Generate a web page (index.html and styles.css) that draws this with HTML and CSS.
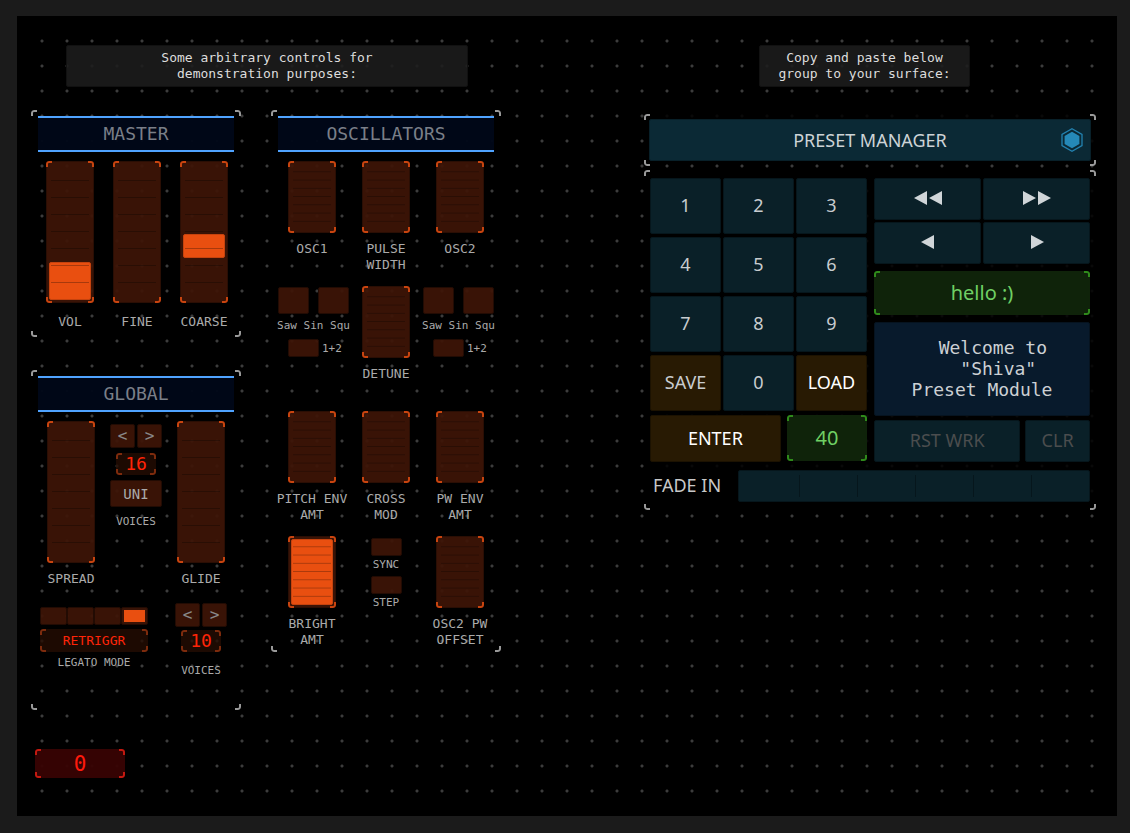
FILE: index.html
```html
<!DOCTYPE html>
<html lang="en">
<head>
<meta charset="utf-8">
<title>Preset Manager</title>
<link rel="stylesheet" href="styles.css">
</head>
<body>
<main class="surface">
  <section class="side side-synth">
    <p class="note note-wide">Some arbitrary controls for<br>demonstration purposes:</p>
    <div class="groups">
      <div class="column">
        <section class="group master">
          <h2 class="title">MASTER</h2>
          <div class="master-faders">
            <label class="control"><span class="fader tall"><span class="fill" style="height:28%"></span><input type="range" value="28"></span><span class="caption">VOL</span></label>
            <label class="control"><span class="fader tall"><input type="range" value="0"></span><span class="caption">FINE</span></label>
            <label class="control"><span class="fader tall"><span class="fill" style="height:18%;margin-bottom:42px"></span><input type="range" value="50"></span><span class="caption">COARSE</span></label>
          </div>
        </section>
        <section class="group global">
          <h2 class="title">GLOBAL</h2>
          <div class="global-top">
            <label class="control"><span class="fader tall"><input type="range" value="0"></span><span class="caption">SPREAD</span></label>
            <div class="voices unison">
              <div class="steps"><button class="pad">&lt;</button><button class="pad">&gt;</button></div>
              <output class="value">16</output>
              <button class="pad uni">UNI</button>
              <span class="small">VOICES</span>
            </div>
            <label class="control"><span class="fader tall"><input type="range" value="0"></span><span class="caption">GLIDE</span></label>
          </div>
          <div class="global-bottom">
            <div class="legato">
              <div class="modes">
                <input type="radio" name="legato" aria-label="Mode 1"><input type="radio" name="legato" aria-label="Mode 2"><input type="radio" name="legato" aria-label="Mode 3"><input type="radio" name="legato" aria-label="Mode 4" checked>
              </div>
              <output class="value wide">RETRIGGR</output>
              <span class="small">LEGATO MODE</span>
            </div>
            <div class="voices">
              <div class="steps"><button class="pad">&lt;</button><button class="pad">&gt;</button></div>
              <output class="value">10</output>
              <span class="small">VOICES</span>
            </div>
          </div>
        </section>
        <output class="value counter">0</output>
      </div>
      <section class="group oscillators">
        <h2 class="title">OSCILLATORS</h2>
        <div class="osc-grid">
          <label class="control"><span class="fader"><input type="range" value="0"></span><span class="caption">OSC1</span></label>
          <label class="control"><span class="fader"><input type="range" value="0"></span><span class="caption">PULSE<br>WIDTH</span></label>
          <label class="control"><span class="fader"><input type="range" value="0"></span><span class="caption">OSC2</span></label>

          <div class="waves waves-left">
            <div class="wave-row"><input class="toggle square" type="checkbox" aria-label="Osc 1 saw"><input class="toggle square" type="checkbox" aria-label="Osc 1 square"></div>
            <span class="small">Saw Sin Squ</span>
            <label class="sum"><input class="toggle" type="checkbox"><span class="small">1+2</span></label>
          </div>
          <label class="control"><span class="fader"><input type="range" value="0"></span><span class="caption">DETUNE</span></label>
          <div class="waves">
            <div class="wave-row"><input class="toggle square" type="checkbox" aria-label="Osc 2 saw"><input class="toggle square" type="checkbox" aria-label="Osc 2 square"></div>
            <span class="small">Saw Sin Squ</span>
            <label class="sum"><input class="toggle" type="checkbox"><span class="small">1+2</span></label>
          </div>

          <label class="control"><span class="fader"><input type="range" value="0"></span><span class="caption">PITCH ENV<br>AMT</span></label>
          <label class="control"><span class="fader"><input type="range" value="0"></span><span class="caption">CROSS<br>MOD</span></label>
          <label class="control"><span class="fader"><input type="range" value="0"></span><span class="caption">PW ENV<br>AMT</span></label>

          <label class="control"><span class="fader"><span class="fill" style="height:100%"></span><input type="range" value="100"></span><span class="caption">BRIGHT<br>AMT</span></label>
          <div class="switches">
            <label><input class="toggle" type="checkbox"><span class="small">SYNC</span></label>
            <label><input class="toggle" type="checkbox"><span class="small">STEP</span></label>
          </div>
          <label class="control"><span class="fader"><input type="range" value="0"></span><span class="caption">OSC2 PW<br>OFFSET</span></label>
        </div>
      </section>
    </div>
  </section>

  <section class="side side-preset">
    <p class="note note-narrow">Copy and paste below<br>group to your surface:</p>
    <header class="group preset-head">
      <h1>PRESET MANAGER</h1>
      <svg class="hex" viewBox="0 0 24 26" aria-hidden="true">
        <path d="M12 1.8 22 7.4V18.6L12 24.2 2 18.6V7.4Z" fill="none" stroke="#2382b0" stroke-width="1.3"/>
        <path d="M12 4.8 19.4 8.9V17.1L12 21.2 4.6 17.1V8.9Z" fill="#2589b8"/>
      </svg>
    </header>
    <div class="group preset-body">
      <div class="halves">
        <div class="keys-side">
          <div class="keypad">
            <button class="key">1</button><button class="key">2</button><button class="key">3</button>
            <button class="key">4</button><button class="key">5</button><button class="key">6</button>
            <button class="key">7</button><button class="key">8</button><button class="key">9</button>
            <button class="key brown">SAVE</button><button class="key">0</button><button class="key brown bright">LOAD</button>
          </div>
          <div class="enter-row">
            <button class="key brown bright enter">ENTER</button>
            <output class="value green number">40</output>
          </div>
        </div>
        <div class="info-side">
          <div class="nav">
            <button class="key" aria-label="First"><svg viewBox="0 0 28 14"><path d="M13 0V14L0 7ZM28 0V14L15 7Z"/></svg></button>
            <button class="key" aria-label="Last"><svg viewBox="0 0 28 14"><path d="M0 0V14L13 7ZM15 0V14L28 7Z"/></svg></button>
            <button class="key" aria-label="Previous"><svg viewBox="0 0 28 14"><path d="M20 0V14L7 7Z"/></svg></button>
            <button class="key" aria-label="Next"><svg viewBox="0 0 28 14"><path d="M8 0V14L21 7Z"/></svg></button>
          </div>
          <output class="value green name">hello :)</output>
          <pre class="message">  Welcome to
   "Shiva"
Preset Module</pre>
          <div class="reset-row">
            <button class="key reset" disabled>RST WRK</button><button class="key clear" disabled>CLR</button>
          </div>
        </div>
      </div>
      <label class="fade"><span>FADE IN</span><span class="fade-track"><input type="range" value="0"></span></label>
    </div>
  </section>
</main>
</body>
</html>
```
FILE: styles.css
```css
* { box-sizing: border-box; }

body {
  margin: 0;
  padding: 16px 13px 17px 17px;
  background: #1b1b1b;
  color: #aaa;
  font: 13px/16px "DejaVu Sans Mono", monospace;
}

h1, h2, p, pre { margin: 0; font-weight: 400; }
button, output { font: inherit; color: inherit; }
button { padding: 0; border: 0; }
input { margin: 0; }

.surface {
  display: flex;
  justify-content: space-between;
  gap: 24px;
  min-height: calc(100vh - 33px);
  padding: 14px 21px 20px 14px;
  background:
    radial-gradient(circle at 12px 12px, #3c3c3c 1px, transparent 2px) 13px 13px / 25px 25px padding-box content-box,
    #000;
}

.side { padding-top: 15px; }
.side-synth { flex: 0 0 470px; }
.side-preset { flex: 0 1 452px; }

.note {
  height: 42px;
  padding: 4px 0;
  border: 1px solid #111;
  border-radius: 2px;
  background: rgba(29, 29, 29, .88);
  color: #ddd;
  text-align: center;
}
.note-wide { width: 402px; margin: 0 auto 23px 35px; }
.note-narrow { width: 211px; margin: 0 0 27px 115px; }

.groups { display: flex; gap: 30px; align-items: flex-start; }
.column { flex: 0 0 210px; }
.group, .fader, .value { position: relative; }
.group { --corner: #999; }

/* Bracket marks on the four corners */
.group::after, .fader::after, .value::after {
  content: "";
  position: absolute;
  inset: 0;
  border: 2px solid var(--corner);
  border-radius: 3px;
  pointer-events: none;
  --c: linear-gradient(#000 0 0);
  mask: var(--c) 0 0, var(--c) 100% 0, var(--c) 0 100%, var(--c) 100% 100%;
  mask-size: 6px 6px;
  mask-repeat: no-repeat;
}

.title {
  margin: 0 7px 9px;
  height: 36px;
  border: solid #4fa3ff;
  border-width: 2px 0;
  background: rgba(0, 7, 24, .97);
  color: #7a7f88;
  font-size: 18px;
  line-height: 32px;
  text-align: center;
}

.master { padding: 6px 0 7px; margin-bottom: 33px; }
.master-faders { display: flex; gap: 19px; padding-left: 15px; }
.master .caption { margin-top: 11px; }

.control { display: flex; flex-direction: column; align-items: center; }
.master .control, .global .control { width: 48px; }
.caption { margin-top: 8px; text-align: center; white-space: nowrap; }

.fader {
  --corner: #c8440f;
  display: flex;
  align-items: flex-end;
  width: 48px;
  height: 72px;
  padding: 3px;
  border-radius: 3px;
  background: rgba(62, 21, 6, .92);
  box-shadow: inset 0 0 0 1px #2a0e04;
}
.fader.tall { height: 142px; }
.fader::before {
  content: "";
  position: absolute;
  inset: 3px 5px;
  background: linear-gradient(to top, rgba(0, 0, 0, .28) 1px, transparent 1px) 0 0 / 100% 12.5%;
  clip-path: inset(0 0 2px 0);
}
.fill {
  width: 100%;
  border: 1px solid #c5430e;
  border-radius: 2px;
  background: #e94f10;
}
.fader input, .fade-track input {
  position: absolute;
  inset: 0;
  width: 100%;
  height: 100%;
  opacity: 0;
}
.fader input { writing-mode: vertical-lr; direction: rtl; }

.global { padding: 6px 0 31px; margin-bottom: 39px; }
.global-top { display: flex; gap: 15px; padding-left: 16px; margin-bottom: 16px; }
.global-bottom { display: flex; gap: 27px; padding-left: 9px; }
.voices { display: flex; flex-direction: column; align-items: center; width: 52px; }
.unison { padding-top: 3px; }
.steps { display: flex; gap: 2px; margin-bottom: 3px; }
.unison .steps { margin-bottom: 5px; }
.pad, .toggle, .modes input {
  appearance: none;
  border: 1px solid #220b03;
  border-radius: 2px;
  background: rgba(62, 21, 6, .92);
}
.pad { width: 25px; height: 24px; color: #888; font-size: 16px; line-height: 22px; }
.pad.uni { width: 52px; height: 27px; margin: 5px 0 7px; color: #aaa; font-size: 14px; }
.small { font-size: 11px; white-space: nowrap; }
.voices > .small { margin-top: 11px; }
.unison > .small { margin-top: 0; }

.value {
  --corner: #7d2b0d;
  display: flex;
  align-items: center;
  justify-content: center;
  width: 40px;
  height: 22px;
  border-radius: 3px;
  background: rgba(36, 12, 3, .8);
  color: #ff2408;
  font-size: 18px;
}
.value.wide { width: 108px; height: 23px; margin: 4px 0 3px; font-size: 13px; }
.value.counter {
  --corner: #c31910;
  width: 90px;
  height: 29px;
  margin-left: 4px;
  background: rgba(56, 3, 3, .94);
  color: #ff1a0c;
  font-size: 21px;
}

.legato { display: flex; flex-direction: column; align-items: center; width: 108px; padding-top: 4px; }
.modes { display: flex; }
.modes input { width: 27px; height: 18px; }
.modes input:checked {
  padding: 2px;
  background: linear-gradient(#e94f10 0 0) content-box, rgba(62, 21, 6, .92);
}

.oscillators { flex: 0 0 230px; padding: 6px 0 4px; }
.osc-grid {
  display: grid;
  grid-template-columns: repeat(3, 74px);
  grid-auto-rows: 112px;
  row-gap: 13px;
  padding-left: 4px;
}
.toggle { display: block; width: 31px; height: 18px; }
.toggle.square { height: 27px; }
.waves { display: flex; flex-direction: column; align-items: center; width: 71px; padding-top: 1px; }
.waves-left { justify-self: end; }
.wave-row { display: flex; gap: 9px; margin-bottom: 4px; }
.sum { display: flex; gap: 3px; width: 71px; padding-left: 10px; margin-top: 5px; line-height: 20px; }
.switches { display: flex; flex-direction: column; align-items: center; gap: 3px; padding-top: 2px; }
.switches label { display: flex; flex-direction: column; align-items: center; gap: 1px; }

.side-preset h1, .key, .fade, .green { font-family: "Noto Sans", sans-serif; font-size: 18px; }
.preset-head {
  display: flex;
  align-items: center;
  height: 52px;
  margin-bottom: 4px;
  padding: 5px;
  background: linear-gradient(rgba(0, 0, 0, .85) 0 0) no-repeat 0 0 / 100% 46px;
}
.side-preset h1 {
  flex: 1;
  border: 1px solid #082029;
  border-radius: 2px;
  background: #0b2935;
  color: #cdd3d6;
  line-height: 40px;
  text-align: center;
}
.hex { position: absolute; right: 12px; top: 13px; width: 24px; height: 26px; }

.preset-body { padding: 8px 6px; background: rgba(0, 0, 0, .85); }
.halves { display: flex; gap: 7px; }
.keys-side { flex: 217; }
.info-side { flex: 216; }
.keypad { display: grid; grid-template-columns: repeat(3, 1fr); grid-auto-rows: 56px; gap: 3px 2px; }
.key {
  padding-bottom: 2px;
  border: 1px solid #06161c;
  border-radius: 2px;
  background: #0a2028;
  color: #c8cccf;
}
.key.brown { border-color: #1c1201; background: #281a03; }
.key.bright { color: #fff; }
.key:disabled { color: #4b4d4e; }
.key svg { display: block; width: 28px; height: 14px; margin: 0 auto; fill: #d0d5d8; }

.enter-row { display: flex; gap: 6px; margin-top: 4px; }
.enter { flex: 130; height: 47px; }
.value.green { --corner: #2f8a1b; background: #0f230a; color: #6fd064; font-size: 20px; }
.value.number { flex: 81; height: 46px; }
.nav { display: grid; grid-template-columns: 1fr 1fr; grid-auto-rows: 42px; gap: 2px; }
.value.name { width: auto; height: 44px; margin: 7px 0; }
.message {
  display: flex;
  align-items: center;
  justify-content: center;
  height: 94px;
  padding-bottom: 2px;
  border: 1px solid #06131f;
  border-radius: 2px;
  background: #081a2c;
  color: #ccd0d4;
  font: 18px/21px "DejaVu Sans Mono", monospace;
  text-align: center;
}
.reset-row { display: flex; gap: 5px; margin-top: 4px; }
.reset { flex: 147; height: 42px; }
.clear { flex: 64; height: 42px; }

.fade { display: flex; align-items: center; margin-top: 8px; color: #c8c8c8; }
.fade > span:first-child { flex: 0 0 88px; padding: 0 0 2px 3px; }
.fade-track {
  position: relative;
  flex: 1;
  height: 32px;
  padding: 4px 3px;
  border: 1px solid #06161c;
  border-radius: 2px;
  background: linear-gradient(to left, #06161c 1px, transparent 1px) 0 0 / 58px 100% content-box, #0a2028;
}
```
